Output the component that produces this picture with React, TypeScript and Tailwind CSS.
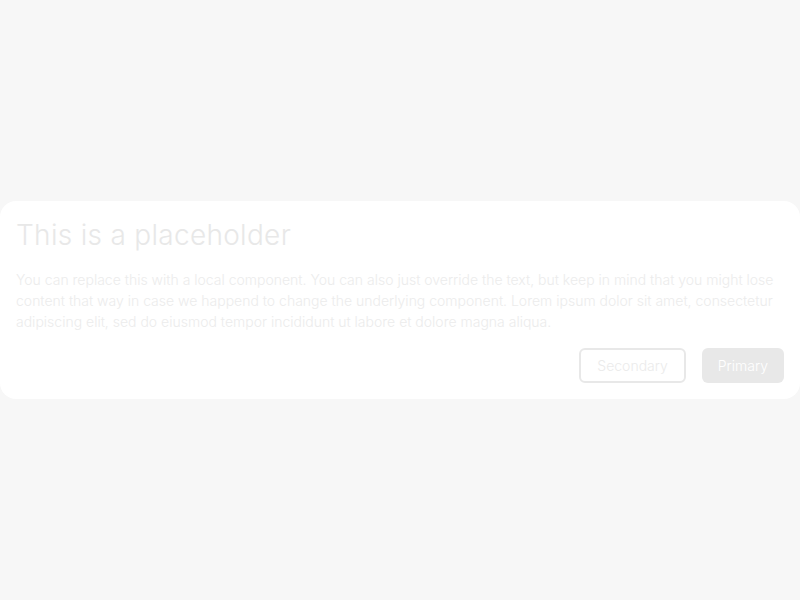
export default function App() {
  return (
    <div className="min-h-screen bg-[#f7f7f7] flex items-center font-['Inter',sans-serif]">
      <div className="w-full bg-white rounded-2xl p-4 flex flex-col gap-4">
        <h1 className="text-[28px] leading-9 text-[#e8e8e8] font-[350] tracking-[0.3px]">This is a placeholder</h1>
        <p className="text-sm leading-[21px] text-[#ececec] font-[350]">
          You can replace this with a local component. You can also just override the text, but keep in mind that you might lose content that way in case we happend to change the underlying component. Lorem ipsum dolor sit amet, consectetur adipiscing elit, sed do eiusmod tempor incididunt ut labore et dolore magna aliqua.
        </p>
        <div className="flex justify-end gap-4">
          <button className="h-[35px] px-4 border-2 border-[#e8e8e8] rounded-md text-sm font-[350] text-[#ebebeb] bg-white">Secondary</button>
          <button className="h-[35px] px-4 rounded-md text-sm font-[350] text-white bg-[#e8e8e8]">Primary</button>
        </div>
      </div>
    </div>
  )
}
